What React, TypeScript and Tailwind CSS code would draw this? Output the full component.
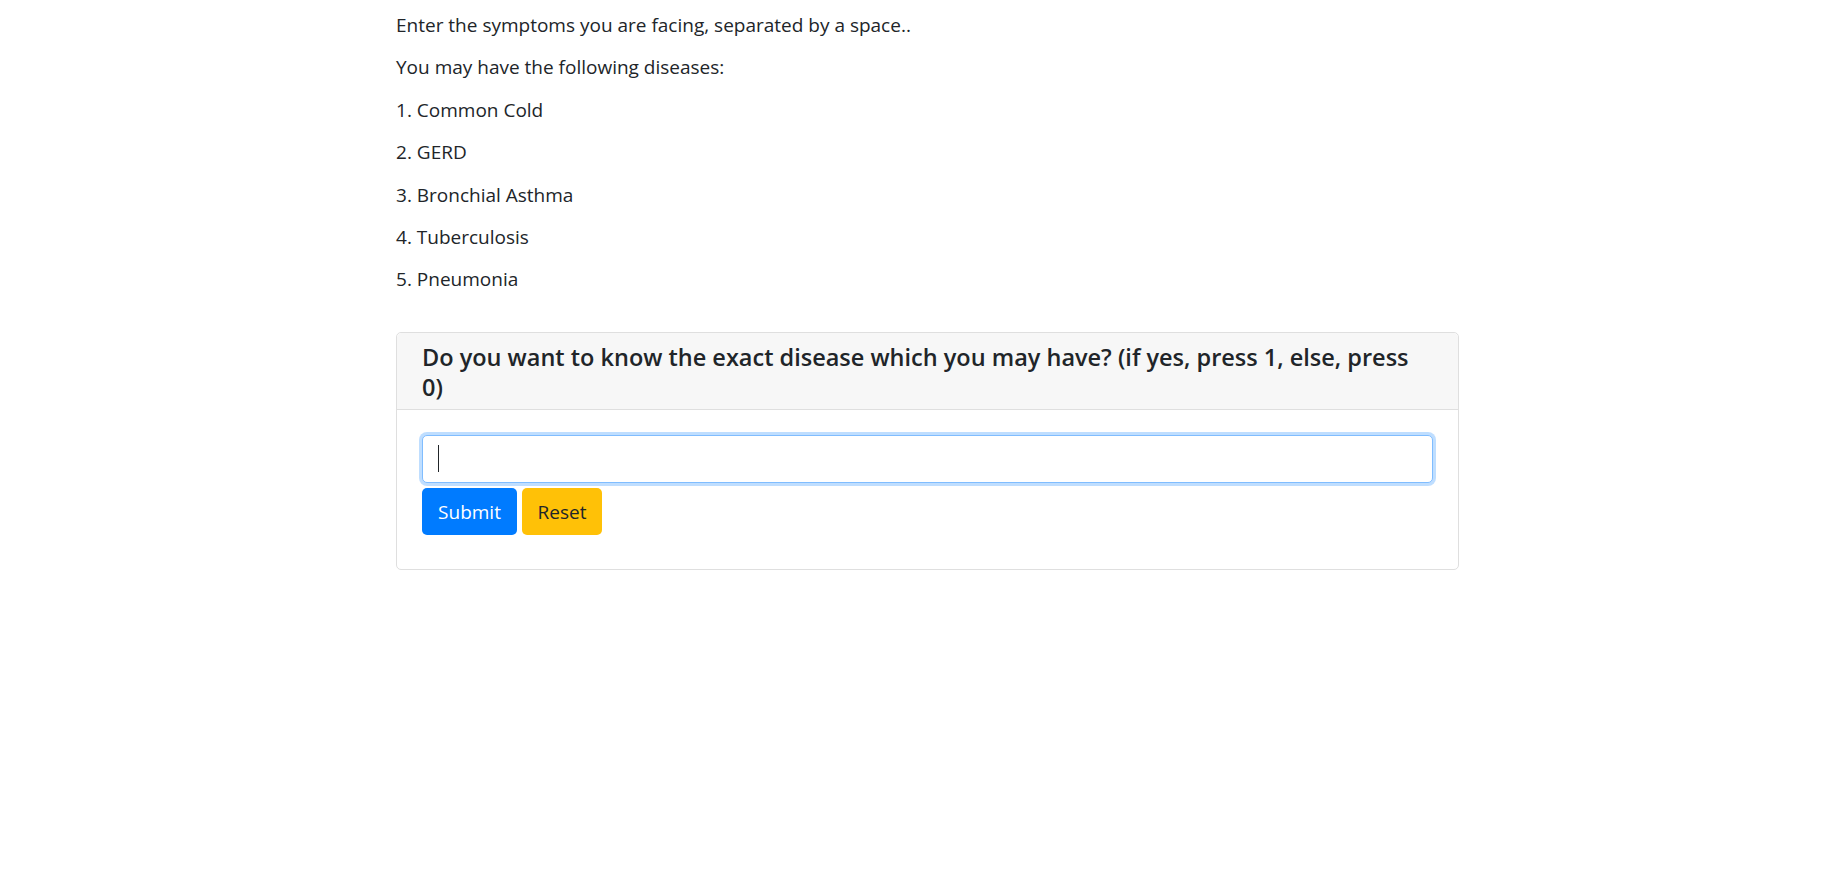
import React from "react";

const diseases = ["Common Cold", "GERD", "Bronchial Asthma", "Tuberculosis", "Pneumonia"];

export default function App() {
  return (
    <div className="min-h-[873px] w-full bg-white text-[#212529]" style={{ fontFamily: '"Open Sans", "Noto Sans", sans-serif' }}>
      <div className="ml-[396px] w-[1063px] pt-[10px]">
        <p className="text-[19px] leading-[30px] mb-[12.4px]">Enter the symptoms you are facing, separated by a space..</p>
        <p className="text-[19px] leading-[30px] mb-[12.4px]">You may have the following diseases:</p>
        {diseases.map((d, i) => (
          <p key={d} className="text-[19px] leading-[30px] mb-[12.4px]">
            {i + 1}. {d}
          </p>
        ))}
        <div className="mt-[38px] rounded-[5px] border border-[#dfdfdf]">
          <div className="rounded-t-[5px] border-b border-[#dfdfdf] bg-[#f7f7f7] px-[25px] pt-[9px] pb-[7px]">
            <h5 className="text-[23.5px] font-semibold leading-[30px]">
              Do you want to know the exact disease which you may have? (if yes, press 1, else, press 0)
            </h5>
          </div>
          <div className="px-[25px] pt-[25px] pb-[34px]">
            <div className="relative">
              <input
                type="text"
                className="block h-[48px] w-full rounded-[5px] border border-[#80bdff] bg-white px-[15px] text-[19px] caret-transparent outline-none shadow-[0_0_0_3px_rgba(0,123,255,0.25)]"
              />
              <span className="pointer-events-none absolute left-[16px] top-[10px] h-[27px] w-px bg-[#212529]" />
            </div>
            <div className="mt-[5px] flex gap-[5px]">
              <button className="h-[47px] w-[95px] rounded-[5px] bg-[#007bff] text-[19px] text-white">Submit</button>
              <button className="h-[47px] w-[80px] rounded-[5px] bg-[#ffc107] text-[19px] text-[#212529]">Reset</button>
            </div>
          </div>
        </div>
      </div>
    </div>
  );
}
